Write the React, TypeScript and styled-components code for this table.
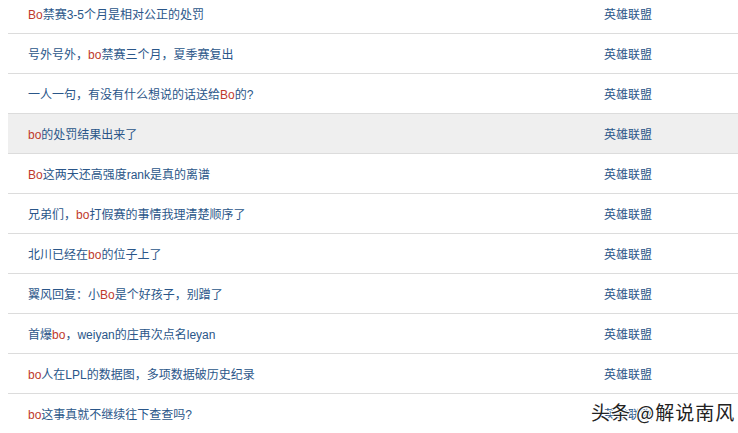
import React from "react";
import styled, { createGlobalStyle } from "styled-components";

const Global = createGlobalStyle`
  html, body { margin: 0; padding: 0; background: #fff; overflow: hidden; }
  body { font-family: "Liberation Sans", "Noto Sans CJK SC", sans-serif; }
`;

const Page = styled.div`
  position: relative;
  width: 738px;
  height: 433px;
  overflow: hidden;
  padding-left: 8px;
  box-sizing: border-box;
`;

const List = styled.ul`
  list-style: none;
  margin: -6px 0 0 0;
  padding: 0;
`;

const Row = styled.li<{ $hl?: boolean }>`
  display: flex;
  align-items: center;
  height: 39px;
  border-bottom: 1px solid #dcdcdc;
  background: ${(p) => (p.$hl ? "#efefef" : "transparent")};
  font-size: 12px;
  color: #2a5689;
`;

const Title = styled.span`
  flex: 0 0 576px;
  padding-left: 20px;
  white-space: nowrap;
`;

const Red = styled.span`
  color: #c0392b;
`;

const Cat = styled.span`
  white-space: nowrap;
`;

const Watermark = styled.div`
  position: absolute;
  left: 591px;
  top: 398px;
  font-family: "Noto Sans CJK SC", sans-serif;
  font-size: 19px;
  letter-spacing: 1px;
  color: #222;
  text-shadow: 1px 1px 0 #fff, -1px -1px 0 #fff, 1px -1px 0 #fff, -1px 1px 0 #fff;
  white-space: nowrap;
`;

type Item = { parts: [string, boolean][]; hl?: boolean };

const items: Item[] = [
  { parts: [["Bo", true], ["禁赛3-5个月是相对公正的处罚", false]] },
  { parts: [["号外号外，", false], ["bo", true], ["禁赛三个月，夏季赛复出", false]] },
  { parts: [["一人一句，有没有什么想说的话送给", false], ["Bo", true], ["的?", false]] },
  { parts: [["bo", true], ["的处罚结果出来了", false]], hl: true },
  { parts: [["Bo", true], ["这两天还高强度rank是真的离谱", false]] },
  { parts: [["兄弟们，", false], ["bo", true], ["打假赛的事情我理清楚顺序了", false]] },
  { parts: [["北川已经在", false], ["bo", true], ["的位子上了", false]] },
  { parts: [["翼风回复：小", false], ["Bo", true], ["是个好孩子，别蹭了", false]] },
  { parts: [["首爆", false], ["bo", true], ["，weiyan的庄再次点名leyan", false]] },
  { parts: [["bo", true], ["人在LPL的数据图，多项数据破历史纪录", false]] },
  { parts: [["bo", true], ["这事真就不继续往下查查吗?", false]] },
];

export default function App() {
  return (
    <Page>
      <Global />
      <List>
        {items.map((it, i) => (
          <Row key={i} $hl={it.hl}>
            <Title>
              {it.parts.map(([t, r], j) => (r ? <Red key={j}>{t}</Red> : <span key={j}>{t}</span>))}
            </Title>
            <Cat>英雄联盟</Cat>
          </Row>
        ))}
      </List>
      <Watermark>头条 @解说南风</Watermark>
    </Page>
  );
}
